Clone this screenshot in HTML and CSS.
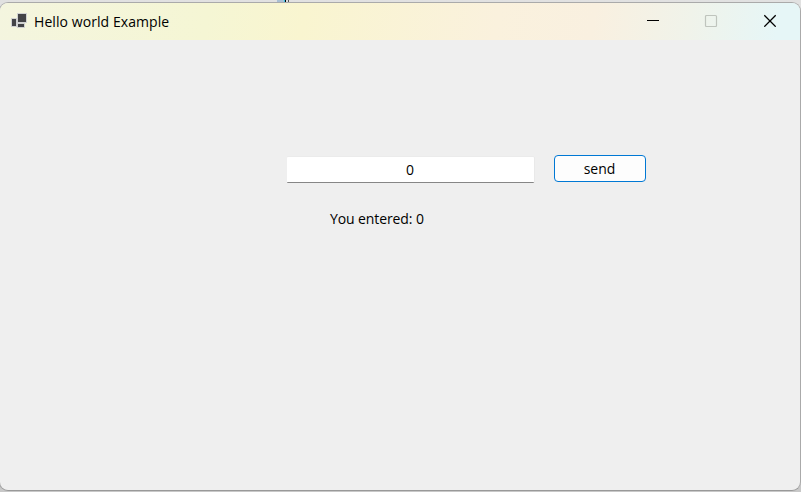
FILE: index.html
```html
<!DOCTYPE html>
<html lang="en">
<head>
<meta charset="utf-8">
<title>Hello world Example</title>
<link rel="stylesheet" href="styles.css">
</head>
<body>
<div class="backdrop-mark"></div>
<main class="window">
  <header class="titlebar">
    <svg class="app-icon" width="18" height="16" viewBox="0 0 18 16">
      <g fill="#434347" stroke="#d0d1d2" stroke-width="1">
        <rect x=".5" y="5.5" width="5" height="8"/>
        <rect x="6.5" y="10.5" width="7" height="4"/>
        <rect x="6.5" y=".5" width="9" height="9"/>
      </g>
    </svg>
    <h1 class="title">Hello world Example</h1>
    <div class="controls">
      <svg width="14" height="14" viewBox="0 0 14 14"><path d="M1 7.5h12" stroke="#000"/></svg>
      <svg width="14" height="14" viewBox="0 0 14 14"><rect x="1.5" y="2.5" width="11" height="11" rx="1" fill="none" stroke="#bfc4bd" stroke-width="1.2"/></svg>
      <svg width="14" height="14" viewBox="0 0 14 14"><path d="M1.3 2.3l11.4 11.4M12.7 2.3L1.3 13.7" stroke="#000" stroke-width="1.3"/></svg>
    </div>
  </header>
  <form class="entry-row">
    <input class="entry" type="text" value="0" aria-label="Value">
    <button class="send" type="button">send</button>
  </form>
  <p class="result">You entered: 0</p>
</main>
</body>
</html>
```
FILE: styles.css
```css
* { box-sizing: border-box; }
body {
  margin: 0;
  height: 492px;
  padding-top: 2px;
  overflow: hidden;
  background: linear-gradient(#e1e1e1, #c8c8c8);
  font-family: "Open Sans", "Noto Sans", sans-serif;
  font-size: 14px;
  color: #000;
}
.backdrop-mark {
  position: absolute;
  top: 0;
  left: 277px;
  width: 12px;
  height: 2px;
  background: linear-gradient(90deg, #a9bfd4 0 7px, #35c5e5 7px 8px, #000 8px 9px, #ddd 9px 11px, #555 11px);
}
.window {
  width: 802px;
  height: 489px;
  margin-left: -1px;
  border: 1px solid #aaa;
  border-bottom-color: #999;
  border-radius: 9px;
  overflow: hidden;
  background: #efefef;
}
.titlebar {
  display: flex;
  align-items: center;
  height: 37px;
  padding: 0 23px 0 11px;
  background: linear-gradient(100deg, #f4f5df 0%, #f5f6d4 26%, #f9f5d0 38%, #faf1dd 62%, #f9f0e0 74%, #f0f3ea 86%, #e6f6f7 97%);
}
.app-icon { margin-top: -2px; }
.title {
  margin: 0 0 0 5px;
  font-size: 14px;
  font-weight: 400;
  line-height: 20px;
  letter-spacing: 0.07px;
}
.controls {
  display: grid;
  grid-template-columns: 58px 59px 14px;
  margin-left: auto;
  margin-top: -3px;
}
.entry-row {
  display: flex;
  align-items: flex-start;
  gap: 20px;
  padding: 115px 0 0 287px;
}
.entry {
  width: 247px;
  height: 26px;
  margin: 2px 0 0;
  padding: 0 1px 0 0;
  border: 0;
  border-bottom: 1px solid #868686;
  border-radius: 1px;
  box-shadow: 1px 0 #e9e9e9, 0 -1px #ebebeb;
  background: #fff;
  color: #000;
  font: inherit;
  text-align: center;
  outline: 0;
}
.send {
  width: 92px;
  height: 27px;
  padding: 0 1px 0 0;
  border: 1px solid #0078d4;
  border-radius: 4px;
  background: #fdfdfd;
  color: #000;
  font: inherit;
}
.result {
  margin: 26px 0 0 330px;
  line-height: 20px;
  letter-spacing: -0.1px;
}
```
